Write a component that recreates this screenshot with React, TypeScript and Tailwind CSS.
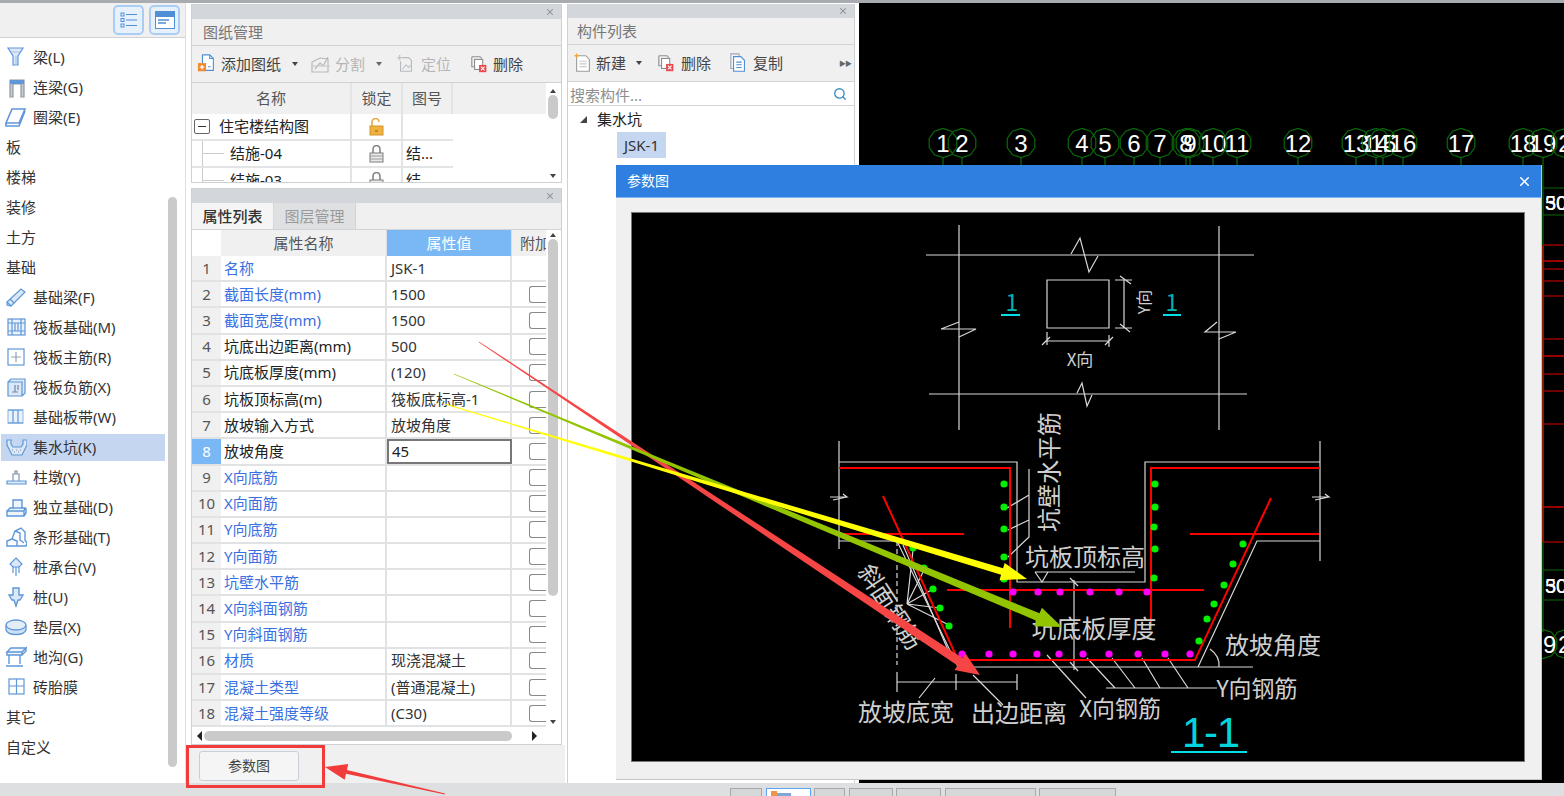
import { Search, X } from "lucide-react";
import type { ReactNode } from "react";

const blue = "#5f97d8";
const gray = "#8f979f";

const Ico = ({ children, size = 22 }: { children: ReactNode; size?: number }) => (
  <svg width={size} height={size} viewBox="0 0 22 22" fill="none" strokeWidth="1.2" className="shrink-0">
    {children}
  </svg>
);

const sideIcons: Record<string, ReactNode> = {
  liang: (
    <g stroke={blue}>
      <path d="M3 2h15l-5 8v9h-5v-9z" fill="#dbe8f7" />
      <path d="M6 6h9M11 10v9" stroke="#a9c4e6" />
    </g>
  ),
  lianliang: (
    <g>
      <path d="M5 4h14v17h-3V8H8v13H5z" fill="#c8ccd2" stroke={gray} />
      <path d="M5 4h14v4H5z" fill={blue} />
    </g>
  ),
  quanliang: (
    <g stroke={blue} strokeWidth="1.6">
      <path d="M7 3h13l-6 14H1z" fill="#fff" />
      <path d="M1 17v3h13l6-15" />
    </g>
  ),
  jcl: (
    <g stroke={blue}>
      <path d="M2 16 16 3l4 3L6 20l-4-1z" fill="#dbe8f7" />
      <path d="M2 16l4 4M5 13l4 4" />
    </g>
  ),
  fbjc: (
    <g stroke={blue}>
      <rect x="3" y="3" width="17" height="16" fill="#eaf1fa" />
      <path d="M3 7h17M3 15h17M7 3v16M16 3v16M10 7v8M13 7v8" />
    </g>
  ),
  fbzj: (
    <g stroke={blue}>
      <rect x="3" y="3" width="16" height="16" />
      <path d="M11 6v10M6 11h10" stroke="#8fa3b8" />
    </g>
  ),
  fbfj: (
    <g stroke={blue}>
      <path d="M3 6h14v14H3zM3 6l3-3h14v14l-3 3" fill="#dbe8f7" />
      <path d="M7 16h6M10 9v7M13 9v5" stroke="#6d87a5" />
    </g>
  ),
  jcbd: (
    <g stroke="#9fc0e6">
      <rect x="3" y="4" width="15" height="13" fill="#eaf1fa" />
      <path d="M3 4h15M3 17h15M8 4v13M13 4v13" stroke={blue} />
    </g>
  ),
  jsk: (
    <g stroke={blue}>
      <path d="M2 4h4v4l2 3h8l2-3V4h4v5l-5 10H7L2 9z" fill="#dbe8f7" />
      <path d="M7 14h1M11 14h1M15 14h1M9 16h1M13 16h1" stroke="#7f8d9c" />
    </g>
  ),
  zd: (
    <g stroke={blue}>
      <path d="M2 15h19v3H2z" fill="#dbe8f7" />
      <path d="M8 15V8h6v7M10 8V5h2v3" stroke="#7e93ab" />
    </g>
  ),
  dljc: (
    <g stroke={blue} strokeWidth="1.4">
      <path d="M2 15h17v5H2zM2 15l3-3h3V4h9v8h3l-1 3M19 20l2-3v-5" fill="#eef4fb" />
      <path d="M8 12h9" />
    </g>
  ),
  txjc: (
    <g stroke={blue} strokeWidth="1.4">
      <path d="M2 20v-5l5-2 3-8 6-3 4 4v8l2 3-1 3z" fill="#fff" />
      <path d="M10 5l5 2v7l4 3M7 13l5 2v5" />
    </g>
  ),
  zct: (
    <g stroke={blue}>
      <path d="M11 2l6 6-3 3H8L5 8z" fill="#dbe8f7" />
      <path d="M8 11v6M11 11v9M14 11v6" />
    </g>
  ),
  zhuang: (
    <g stroke={blue} strokeWidth="1.4">
      <path d="M8 2h6v7h4l-3 5h-2l-2 6-2-6H7L4 9h4z" fill="#dbe8f7" />
    </g>
  ),
  dc: (
    <g stroke={blue} strokeWidth="1.3">
      <path d="M1 9v5c2 6 18 6 20 0V9" fill="#cfe0f4" />
      <ellipse cx="11" cy="9" rx="10" ry="5" fill="#e3edf8" />
    </g>
  ),
  dg: (
    <g stroke={blue} strokeWidth="1.4">
      <path d="M2 6l4-4h15l-4 4zM2 6h15v3H2zM4 9v9M15 9v9M1 20h17M17 6l4-4v3l-4 4" fill="#eef4fb" />
    </g>
  ),
  ztm: (
    <g stroke={blue}>
      <rect x="4" y="3" width="15" height="15" />
      <path d="M11.5 3v15M4 10h15" />
    </g>
  ),
};

const sideRows: { label: string; icon?: string; active?: boolean }[] = [
  { label: "梁(L)", icon: "liang" },
  { label: "连梁(G)", icon: "lianliang" },
  { label: "圈梁(E)", icon: "quanliang" },
  { label: "板" },
  { label: "楼梯" },
  { label: "装修" },
  { label: "土方" },
  { label: "基础" },
  { label: "基础梁(F)", icon: "jcl" },
  { label: "筏板基础(M)", icon: "fbjc" },
  { label: "筏板主筋(R)", icon: "fbzj" },
  { label: "筏板负筋(X)", icon: "fbfj" },
  { label: "基础板带(W)", icon: "jcbd" },
  { label: "集水坑(K)", icon: "jsk", active: true },
  { label: "柱墩(Y)", icon: "zd" },
  { label: "独立基础(D)", icon: "dljc" },
  { label: "条形基础(T)", icon: "txjc" },
  { label: "桩承台(V)", icon: "zct" },
  { label: "桩(U)", icon: "zhuang" },
  { label: "垫层(X)", icon: "dc" },
  { label: "地沟(G)", icon: "dg" },
  { label: "砖胎膜", icon: "ztm" },
  { label: "其它" },
  { label: "自定义" },
];

const props: { name: string; value?: string; link?: boolean; noCheck?: boolean }[] = [
  { name: "名称", value: "JSK-1", link: true, noCheck: true },
  { name: "截面长度(mm)", value: "1500", link: true },
  { name: "截面宽度(mm)", value: "1500", link: true },
  { name: "坑底出边距离(mm)", value: "500" },
  { name: "坑底板厚度(mm)", value: "(120)" },
  { name: "坑板顶标高(m)", value: "筏板底标高-1" },
  { name: "放坡输入方式", value: "放坡角度" },
  { name: "放坡角度", value: "45" },
  { name: "X向底筋", link: true },
  { name: "X向面筋", link: true },
  { name: "Y向底筋", link: true },
  { name: "Y向面筋", link: true },
  { name: "坑壁水平筋", link: true },
  { name: "X向斜面钢筋", link: true },
  { name: "Y向斜面钢筋", link: true },
  { name: "材质", value: "现浇混凝土", link: true },
  { name: "混凝土类型", value: "(普通混凝土)", link: true },
  { name: "混凝土强度等级", value: "(C30)", link: true },
];

const axes: [string, number][] = [
  ["1", 943], ["2", 962], ["3", 1021], ["4", 1082], ["5", 1105], ["6", 1134], ["7", 1160],
  ["8", 1186], ["9", 1190], ["10", 1213], ["11", 1237], ["12", 1298], ["13", 1356], ["14", 1376],
  ["15", 1383], ["16", 1403], ["17", 1461], ["18", 1523], ["19", 1543], ["2", 1565],
];

// the CAD axis bubbles are faceted, not true circles
const bubble = (cx: number, cy: number, r = 14.5) =>
  Array.from({ length: 10 }, (_, i) => {
    const a = (i * Math.PI) / 5 + Math.PI / 10;
    return `${cx + r * Math.cos(a)},${cy + r * Math.sin(a)}`;
  }).join(" ");

const Caret = ({ className = "" }: { className?: string }) => (
  <span className={`w-0 h-0 border-x-[3.5px] border-x-transparent border-t-[4px] border-t-[#444] ${className}`} />
);

const PanelHead = () => (
  <div className="h-[14px] bg-[#d3d6da] flex items-center justify-end pr-[6px] shrink-0">
    <X size={10} strokeWidth={2.5} className="text-[#8a8d92]" />
  </div>
);

const PanelTitle = ({ text, className = "" }: { text: string; className?: string }) => (
  <div className={`h-[27px] bg-[#f0f0f0] border-b border-[#d0d3d7] flex items-center text-[#777] shrink-0 ${className}`}>
    {text}
  </div>
);

const DeleteIcon = () => (
  <Ico size={20}>
    <path d="M2 3h9l2 2M2 3v11h3" stroke="#8e8e8e" />
    <rect x="5" y="6" width="9" height="11" fill="#fff" stroke="#8e8e8e" />
    <rect x="10" y="12" width="8" height="8" fill="#e8474c" />
    <path d="M12 14l4 4M16 14l-4 4" stroke="#fff" />
  </Ico>
);

const AddDocIcon = () => (
  <Ico size={20}>
    <path d="M6 1h8l4 4v13H6z" fill="#fff" stroke="#4f8fd6" />
    <path d="M14 1v4h4M12 14h3" stroke="#4f8fd6" />
    <rect x="1" y="10" width="9" height="9" fill="#f08a2c" />
    <path d="M5.5 12v5M3 14.500h5" stroke="#fff" strokeWidth="1.5" />
  </Ico>
);

const SplitIcon = () => (
  <Ico size={22}>
    <path d="M2 9l8-4 8 1v13H2zM5 16l5-6 3 3 5-9" stroke="#b6b9bd" />
    <path d="M1 13h19" stroke="#c9cbce" />
  </Ico>
);

const LocateIcon = () => (
  <Ico size={20}>
    <path d="M7 4h7l3 3v12H5V8" stroke="#b6b9bd" />
    <path d="M4 1v6M1 4h6" stroke="#c2c4c8" strokeWidth="1.6" />
    <path d="M7 17l4-5 3 3 2-3" stroke="#c2c4c8" />
  </Ico>
);

const NewDocIcon = () => (
  <Ico size={20}>
    <path d="M4 3h10l4 4v13H4z" fill="#fff" stroke="#9a9a9a" />
    <path d="M7 9h8M7 12h8M7 15h8" stroke="#c8c8c8" />
    <path d="M4 0l1 2 2 1-2 1-1 2-1-2-2-1 2-1z" fill="#f4a92f" />
  </Ico>
);

const CopyIcon = () => (
  <Ico size={20}>
    <path d="M2 1h9v16H2z" fill="#eef3f9" stroke="#a0a8b0" />
    <path d="M5 4h8l4 4v12H5z" fill="#fff" stroke="#4f8fd6" />
    <path d="M8 10h6M8 13h6M8 16h6" stroke="#4f8fd6" />
  </Ico>
);

const Lock = ({ open }: { open?: boolean }) => (
  <svg width="15" height="18" viewBox="0 0 15 18" fill="none">
    {open ? (
      <>
        <path d="M3 8V4a3.500 3.500 0 0 1 7 0" stroke="#e2a63b" strokeWidth="1.5" />
        <rect x="1" y="8" width="13" height="9" fill="#efb23f" stroke="#d1952d" />
        <path d="M6 13h3" stroke="#8a6418" />
      </>
    ) : (
      <>
        <path d="M4 8V4a3.500 3.500 0 0 1 7 0v4" stroke="#7d7d7d" strokeWidth="1.5" />
        <rect x="1" y="8" width="13" height="9" fill="#e9e9e9" stroke="#7d7d7d" />
        <path d="M1 11h13M1 14h13" stroke="#9a9a9a" />
      </>
    )}
  </svg>
);

const Sidebar = () => (
  <div className="w-[186px] shrink-0 bg-white border-r border-[#dcdfe2] flex flex-col">
    <div className="h-[35px] bg-[#f0f0f0] border-b border-[#cfd2d6] flex items-center justify-end gap-[5px] pr-[5px] shrink-0">
      <div className="w-[31px] h-[30px] rounded-[5px] border-2 border-[#a9cdf4] bg-[#e6f1fc] flex items-center justify-center">
        <svg width="18" height="16" viewBox="0 0 18 16" fill="none" stroke="#4f8fd6">
          <rect x="1" y="1" width="3" height="3" />
          <rect x="1" y="6.500" width="3" height="3" />
          <rect x="1" y="12" width="3" height="3" />
          <path d="M6 2.500h11M6 8h11M6 13.500h11" />
        </svg>
      </div>
      <div className="w-[31px] h-[30px] rounded-[5px] border-2 border-[#a9cdf4] bg-[#e6f1fc] flex items-center justify-center">
        <svg width="20" height="18" viewBox="0 0 20 18" fill="none">
          <rect x="0.500" y="0.500" width="19" height="17" fill="#fff" stroke="#4f8fd6" />
          <rect x="1" y="1" width="18" height="5" fill="#4f8fd6" />
          <path d="M3 9h11M3 12h8" stroke="#4f8fd6" strokeWidth="1.4" />
        </svg>
      </div>
    </div>
    <div className="flex flex-1 min-h-0">
      <div className="w-[165px] pt-[4px] pl-[1px] shrink-0">
        {sideRows.map((row) => (
          <div key={row.label} className="h-[30px] flex items-center">
            <div
              className={`h-[27px] w-full flex items-center text-[#333] ${row.active ? "bg-[#c5d7f0]" : ""} ${row.icon ? "pl-[4px] gap-[6px]" : "pl-[5px]"}`}
            >
              {row.icon && <Ico>{sideIcons[row.icon]}</Ico>}
              {row.label}
            </div>
          </div>
        ))}
      </div>
      <div className="ml-[3px] mt-[159px] mb-[16px] w-[9px] rounded-full bg-[#cacaca]" />
    </div>
  </div>
);

const DrawingPanel = () => (
  <div className="h-[179px] border border-[#cdd1d6] bg-white flex flex-col overflow-hidden shrink-0">
    <PanelHead />
    <PanelTitle text="图纸管理" className="pl-[11px]" />
    <div className="h-[37px] bg-[#f0f0f0] border-b border-[#cfd2d6] flex items-center pl-[5px] text-[#444] shrink-0">
      <AddDocIcon />
      <span className="ml-[4px]">添加图纸</span>
      <Caret className="ml-[11px]" />
      <span className="ml-[12px]"><SplitIcon /></span>
      <span className="ml-[3px] text-[#b5b5b5]">分割</span>
      <Caret className="ml-[11px] border-t-[#666]" />
      <span className="ml-[14px]"><LocateIcon /></span>
      <span className="ml-[5px] text-[#b5b5b5]">定位</span>
      <span className="ml-[19px]"><DeleteIcon /></span>
      <span className="ml-[3px]">删除</span>
    </div>
    <div className="flex flex-1 min-h-0">
      <div className="w-[354px] shrink-0">
        <div className="h-[31px] bg-[#f0f0f0] flex text-[#555] items-center text-center">
          <div className="w-[160px] border-r-2 border-[#e2e4e6] h-full leading-[30px]">名称</div>
          <div className="w-[51px] border-r-2 border-[#e2e4e6] h-full leading-[30px]">锁定</div>
          <div className="w-[50px] border-r-2 border-[#e2e4e6] h-full leading-[30px]">图号</div>
        </div>
        {[
          { name: "住宅楼结构图", top: true, no: "" },
          { name: "结施-04", no: "结..." },
          { name: "结施-03", no: "结..." },
        ].map((r) => (
          <div key={r.name} className="h-[27px] w-[261px] flex border-b-2 border-[#e2e4e6] text-[#222]">
            <div className="w-[160px] border-r-2 border-[#e2e4e6] flex items-center">
              {r.top ? (
                <>
                  <span className="ml-[2px] w-[16px] h-[15px] rounded-[2px] border border-[#666] flex items-center justify-center">
                    <span className="w-[8px] h-px bg-[#333]" />
                  </span>
                  <span className="ml-[9px]">{r.name}</span>
                </>
              ) : (
                <>
                  <span className="ml-[10px] w-[1px] h-full bg-[#ccc]" />
                  <span className="w-[21px] h-px bg-[#ccc]" />
                  <span className="ml-[6px]">{r.name}</span>
                </>
              )}
            </div>
            <div className="w-[51px] border-r-2 border-[#e2e4e6] flex items-center justify-center">
              <Lock open={r.top} />
            </div>
            <div className="w-[50px] pl-[3px] flex items-center">{r.no}</div>
          </div>
        ))}
      </div>
      <div className="w-[14px] flex flex-col items-center pt-[6px]">
        <Caret className="rotate-180 border-t-[#222]" />
        <div className="mt-[2px] w-[10px] h-[24px] rounded-full bg-[#cacaca]" />
        <div className="flex-1" />
        <Caret className="mb-[4px] border-t-[#222]" />
      </div>
    </div>
  </div>
);

const PropertyPanel = () => (
  <div className="h-[557px] border border-[#cdd1d6] bg-white flex flex-col overflow-hidden shrink-0">
    <PanelHead />
    <div className="h-[27px] bg-[#f0f0f0] border-b border-[#d0d3d7] flex shrink-0">
      <div className="w-[82px] bg-[#f5f5f5] flex items-center justify-center text-[#333] font-medium border-r border-[#d6d8db]">属性列表</div>
      <div className="w-[82px] bg-[#dfe0e2] flex items-center justify-center text-[#9a9a9a] border-r border-[#cfd2d6]">图层管理</div>
    </div>
    <div className="flex flex-1 min-h-0">
      <div className="w-[354px] shrink-0 overflow-hidden">
        <div className="h-[26px] flex items-center text-center">
          <div className="w-[29px] h-full bg-white" />
          <div className="w-[166px] h-full bg-[#f0f0f0] text-[#555] leading-[26px] border-r border-[#dcdfe2]">属性名称</div>
          <div className="w-[125px] h-full bg-[#7ab8f5] text-white leading-[26px] border-r border-[#dcdfe2]">属性值</div>
          <div className="w-[34px] h-full bg-[#f0f0f0] text-[#555] leading-[26px] whitespace-nowrap overflow-hidden pl-[8px] text-left">附加</div>
        </div>
        {props.map((p, i) => (
          <div key={p.name} className="h-[26.200px] flex border-b-2 border-[#e0e2e4]">
            <div
              className={`w-[29px] shrink-0 flex items-center justify-center ${i === 7 ? "bg-[#7ab8f5] text-white" : "bg-[#f0f0f0] text-[#555]"}`}
            >
              {i + 1}
            </div>
            <div className={`w-[166px] shrink-0 pl-[3px] flex items-center whitespace-nowrap border-r-2 border-[#e0e2e4] ${p.link ? "text-[#3a70e0]" : "text-[#222]"}`}>
              {p.name}
            </div>
            {i === 7 ? (
              <div className="w-[125px] shrink-0 pl-[3px] flex items-center border-2 border-[#777] text-[#222]">{p.value}</div>
            ) : (
              <div className="w-[125px] shrink-0 pl-[4px] flex items-center whitespace-nowrap border-r-2 border-[#e0e2e4] text-[#333]">{p.value}</div>
            )}
            <div className="flex-1 flex items-center justify-end">
              {!p.noCheck && <span className="w-[17px] h-[17px] rounded-l-[3px] border border-r-0 border-[#8a8a8a]" />}
            </div>
          </div>
        ))}
        <div className="h-[18px] flex items-center pl-[5px]">
          <span className="w-0 h-0 border-y-[5px] border-y-transparent border-r-[5px] border-r-[#222]" />
          <span className="ml-[2px] w-[308px] h-[10px] rounded-full bg-[#cacaca]" />
          <span className="ml-[20px] w-0 h-0 border-y-[5px] border-y-transparent border-l-[5px] border-l-[#222]" />
        </div>
      </div>
      <div className="w-[14px] flex flex-col items-center pt-[3px]">
        <Caret className="rotate-180 border-t-[#222]" />
        <div className="mt-[2px] w-[10px] h-[357px] rounded-full bg-[#cacaca]" />
        <div className="flex-1" />
        <Caret className="mb-[20px] border-t-[#222]" />
      </div>
    </div>
  </div>
);

const ComponentPanel = () => (
  <div className="w-[288px] shrink-0 mt-px border-x border-[#cdd1d6] bg-white flex flex-col">
    <PanelHead />
    <PanelTitle text="构件列表" className="pl-[9px]" />
    <div className="h-[37px] bg-[#f0f0f0] border-b border-[#cfd2d6] flex items-center pl-[5px] text-[#444] shrink-0">
      <NewDocIcon />
      <span className="ml-[3px]">新建</span>
      <Caret className="ml-[10px]" />
      <span className="ml-[15px]"><DeleteIcon /></span>
      <span className="ml-[4px]">删除</span>
      <span className="ml-[18px]"><CopyIcon /></span>
      <span className="ml-[4px]">复制</span>
      <span className="ml-auto mr-[3px] text-[7px] tracking-[-1px] text-[#666]">▶▶</span>
    </div>
    <div className="h-[24px] border-b border-[#d4d7da] flex items-center pl-[2px] pr-[7px] pt-[3px] text-[#8f8f8f] shrink-0">
      搜索构件...
      <Search size={14} strokeWidth={2.4} className="ml-auto -mt-[3px] text-[#3f8fc4]" />
    </div>
    <div className="h-[26px] flex items-center pl-[12px] text-[#222]">
      <span className="w-0 h-0 border-b-[7px] border-b-[#444] border-l-[7px] border-l-transparent" />
      <span className="ml-[10px]">集水坑</span>
    </div>
    <div className="pl-[49px]">
      <div className="w-[49px] h-[26px] bg-[#c5d7f0] flex items-center justify-center text-[#333]">JSK-1</div>
    </div>
  </div>
);

const Canvas = () => (
  <div className="flex-1 bg-black overflow-hidden">
    <svg width="705" height="780" viewBox="859 3 705 780" fontFamily="Liberation Sans, sans-serif">
      {axes.map(([n, x], i) => (
        <g key={i}>
          <polygon points={bubble(x, 143)} fill="none" stroke="#0a6a0a" strokeWidth="1.2" />
          <path d={`M${x} 157.500V170`} stroke="#0a6a0a" strokeWidth="1.2" />
          <text x={x} y={152} fill="#fff" fontSize="24" textAnchor="middle">{n}</text>
        </g>
      ))}
      <path d="M1543 170V632M1543 188H1564M1543 215H1564M1543 570H1564M1543 600H1564" stroke="#0a6a0a" strokeWidth="1.2" />
      <path d="M1543 245V542" stroke="#e00000" strokeWidth="1.2" />
      {[245, 261, 269, 281, 296, 339, 356, 374, 391, 424, 507, 542].map((y) => (
        <path key={y} d={`M1543 ${y}H1564`} stroke={y === 261 || y === 356 || y === 507 ? "#ff0000" : "#b80000"} strokeWidth="1.2" />
      ))}
      {[210, 593].map((y) => (
        <g key={y} fontSize="20" fill="#fff">
          <text x="1545" y={y}>50</text>
          <text x="1545" y={y}>30</text>
        </g>
      ))}
      <polygon points={bubble(1543, 644)} fill="none" stroke="#0a6a0a" strokeWidth="1.2" />
      <polygon points={bubble(1566, 644)} fill="none" stroke="#0a6a0a" strokeWidth="1.2" />
      <text x="1543" y="653" fill="#fff" fontSize="24">9</text>
      <text x="1558" y="653" fill="#fff" fontSize="24">2</text>
    </svg>
  </div>
);

const Dim = ({ x, y, size, fill = "#cfcfcf", rotate, children }: { x: number; y: number; size: number; fill?: string; rotate?: number; children: string }) => (
  <text x={x} y={y} fontSize={size} fill={fill} textAnchor="middle" dominantBaseline="central" transform={rotate ? `rotate(${rotate} ${x} ${y})` : undefined}>
    {children}
  </text>
);

const SectionDrawing = () => (
  <svg width="892" height="548" viewBox="632 213 892 548" fill="none" fontFamily="Noto Sans CJK SC, sans-serif" className="block">
    {/* plan */}
    <g stroke="#d8d8d8" strokeWidth="1.2">
      <path d="M926 255H1254M929 394H1247M959 225V430M1219 226V430" />
      <path d="M1071 254L1080 238L1089 272L1098 256M1077 393L1082 383L1087 406L1092 395" />
      <path d="M959 322L941 329L976 329L959 337M1217 322L1205 332L1236 332L1219 339" />
      <path d="M1047 280H1109V328H1047z" />
      <path d="M1124 280V328M1115 280H1132M1115 328H1132M1120 276L1131 284M1120 324L1130 332" />
      <path d="M1047 341H1109M1047 332V345M1109 335V347M1042 345L1050 337M1105 345L1113 337" />
    </g>
    <Dim x={1080} y={358} size={17}>X向</Dim>
    <Dim x={1143} y={302} size={16} rotate={-90}>Y向</Dim>
    <Dim x={1012} y={301} size={23} fill="#00b4b4">1</Dim>
    <Dim x={1172} y={301} size={23} fill="#00b4b4">1</Dim>
    <path d="M1001 315H1020M1163 315H1181" stroke="#00e0e6" strokeWidth="2" />
    {/* section outline */}
    <g stroke="#d8d8d8" strokeWidth="1.2">
      <path d="M839 462H1017V582H1145V462H1320" />
      <path d="M839 441V549M1320 441V561M830 497H847L843 494M833 500L847 497M1312 497H1329L1325 494M1315 500L1329 497" />
      <path d="M839 541H897L958 667H1253M1198 667L1257 541H1320" />
      <path d="M897 541V665" strokeDasharray="5 3" />
      <path d="M897 682H1017M897 672V692M956 674V690M1017 674V690" />
      <path d="M935 678L919 698M973 675L1003 705M1047 655L1086 698" />
      <path d="M1106 688H1217M1087 658L1115 688M1112 658L1135 688M1142 658L1160 688M1168 658L1188 688" />
      <path d="M1074 580V670M1070 578L1078 586M1070 662L1078 671" />
      <path d="M1035 572H1135M1035 572L1042 582L1048 572" />
      <path d="M1029 469V537L1008 557M1029 495L1007 508M1029 520L1008 530" />
      <path d="M907 604L913 550M907 604L925 568M907 604L933 589M907 604L940 608M907 604L949 625M903 545L948 650" />
      <path d="M1210 649Q1220 656 1219 667" />
    </g>
    {/* rebar */}
    <g stroke="#ff0000" strokeWidth="2">
      <path d="M839 468H1010V628M1320 468H1151V630" />
      <path d="M840 534H964M1190 534H1319M947 590H1204" />
      <path d="M883 496L958 660H1195L1271 498" />
    </g>
    {[[1004, 484], [1004, 507], [1004, 529], [1004, 557], [1004, 579], [1155, 484], [1155, 507], [1154, 527], [1155, 549], [1154, 578], [1243, 544], [1233, 564], [1224, 585], [1214, 604], [1207, 619], [1199, 641], [913, 548], [924, 568], [933, 589], [940, 608], [949, 626]].map(([x, y]) => (
      <circle key={`${x}-${y}`} cx={x} cy={y} r="3.600" fill="#00f000" />
    ))}
    {[1013, 1038, 1060, 1090, 1119, 1147].map((x) => (
      <circle key={x} cx={x} cy={592} r="3.600" fill="#ff00ff" />
    ))}
    {[962, 989, 1013, 1037, 1059, 1083, 1109, 1138, 1165, 1190].map((x) => (
      <circle key={x} cx={x} cy={654} r="3.600" fill="#ff00ff" />
    ))}
    <Dim x={1047} y={472} size={24} rotate={-90}>坑壁水平筋</Dim>
    <Dim x={1085} y={555} size={24}>坑板顶标高</Dim>
    <Dim x={1094} y={627} size={25}>坑底板厚度</Dim>
    <Dim x={1273} y={643} size={24}>放坡角度</Dim>
    <Dim x={1257} y={687} size={23}>Y向钢筋</Dim>
    <Dim x={906} y={710} size={24}>放坡底宽</Dim>
    <Dim x={1019} y={711} size={24}>出边距离</Dim>
    <Dim x={1120} y={707} size={23}>X向钢筋</Dim>
    <Dim x={892} y={606} size={24} rotate={57}>斜面钢筋</Dim>
    <text x={1211} y={747} fontSize="42" fill="#00d4dc" fontFamily="Liberation Sans, sans-serif" textAnchor="middle" textLength="58">1-1</text>
    <path d="M1171 752H1247" stroke="#00e0e6" strokeWidth="2" />
  </svg>
);

const ParamDialog = () => (
  <div className="absolute left-[616px] top-[165px] w-[926px] h-[615px] bg-[#f0f0f0] border-r border-b border-[#c4c6c9] flex flex-col">
    <div className="h-[33px] bg-[#2e7fe0] flex items-center pl-[11px] pr-[9px] text-[14px] text-white shrink-0 border-b border-[#7fb2ee]">
      参数图
      <X size={15} strokeWidth={2.5} className="ml-auto" />
    </div>
    <div className="pl-[15px] pt-[14px]">
      <div className="w-[894px] h-[550px] bg-black border border-[#777]">
        <SectionDrawing />
      </div>
    </div>
  </div>
);

// tapered annotation arrow, page coordinates
const Arrow = ({ from, to, color, w = 6, head = 24, hw = 10 }: { from: [number, number]; to: [number, number]; color: string; w?: number; head?: number; hw?: number }) => {
  const dx = to[0] - from[0];
  const dy = to[1] - from[1];
  const len = Math.hypot(dx, dy);
  const ux = dx / len;
  const uy = dy / len;
  const bx = to[0] - ux * head;
  const by = to[1] - uy * head;
  const at = (x: number, y: number, off: number) => `${x - uy * off},${y + ux * off}`;
  const pts = [
    at(from[0], from[1], 0.4),
    at(bx, by, w / 2),
    at(bx, by, hw),
    `${to[0]},${to[1]}`,
    at(bx, by, -hw),
    at(bx, by, -w / 2),
    at(from[0], from[1], -0.4),
  ].join(" ");
  return <polygon points={pts} fill={color} />;
};

const statusTabs = [32, 45, 31, 44, 45, 91, 77];

export default function App() {
  return (
    <div className="relative w-[1564px] h-[796px] overflow-hidden bg-white flex flex-col text-[15px] leading-none font-['Noto_Sans','Noto_Sans_CJK_SC',sans-serif]">
      <div className="h-[3px] bg-[#a8abb0] shrink-0" />
      <div className="flex h-[780px] shrink-0">
        <Sidebar />
        <div className="w-[381px] shrink-0 flex flex-col bg-white">
          <div className="pl-[5px] pr-[5px] pt-px flex flex-col gap-[5px]">
            <DrawingPanel />
            <PropertyPanel />
          </div>
          <div className="flex-1 bg-[#f0f0f0] mr-[2px] pl-[13px] pt-[6px]">
            <div className="w-[100px] h-[30px] rounded-[3px] border border-[#c9cfd8] bg-[#f5f5f5] flex items-center justify-center text-[14px] text-[#444]">
              参数图
            </div>
          </div>
        </div>
        <ComponentPanel />
        <div className="w-[4px] bg-white shrink-0" />
        <Canvas />
      </div>
      <div className="flex-1 bg-[#dedfe1] flex pl-[730px] pt-[5px] gap-[3.500px] items-start">
        {statusTabs.map((w, i) => (
          <div
            key={i}
            className={`h-[10px] border-t border-x pl-[4px] pt-[2px] ${i === 1 ? "bg-white border-[#5aa5f0]" : "bg-[#d6d7d9] border-[#a8a8a8]"}`}
            style={{ width: w }}
          >
            {i === 1 && (
              <svg width="20" height="6" viewBox="0 0 20 6">
                <rect width="6" height="6" fill="#f0944a" />
                <rect x="6" y="2" width="14" height="4" fill="#7fa6d8" />
              </svg>
            )}
          </div>
        ))}
      </div>
      <ParamDialog />
      <div className="absolute left-[186px] top-[745px] w-[139px] h-[43px] border-[3px] border-[#f23c3c]" />
      <svg className="absolute inset-0 pointer-events-none" width="1564" height="796" viewBox="0 0 1564 796">
        <Arrow from={[479, 342]} to={[980, 675]} color="#f54545" w={9} head={24} hw={10} />
        <Arrow from={[454, 374]} to={[1062, 627]} color="#93c400" w={8} head={26} hw={10} />
        <Arrow from={[445, 404]} to={[1027, 579]} color="#ffff00" w={7} head={26} hw={9} />
        <Arrow from={[445, 794]} to={[325, 767]} color="#f23c3c" w={4} head={22} hw={8} />
      </svg>
    </div>
  );
}
